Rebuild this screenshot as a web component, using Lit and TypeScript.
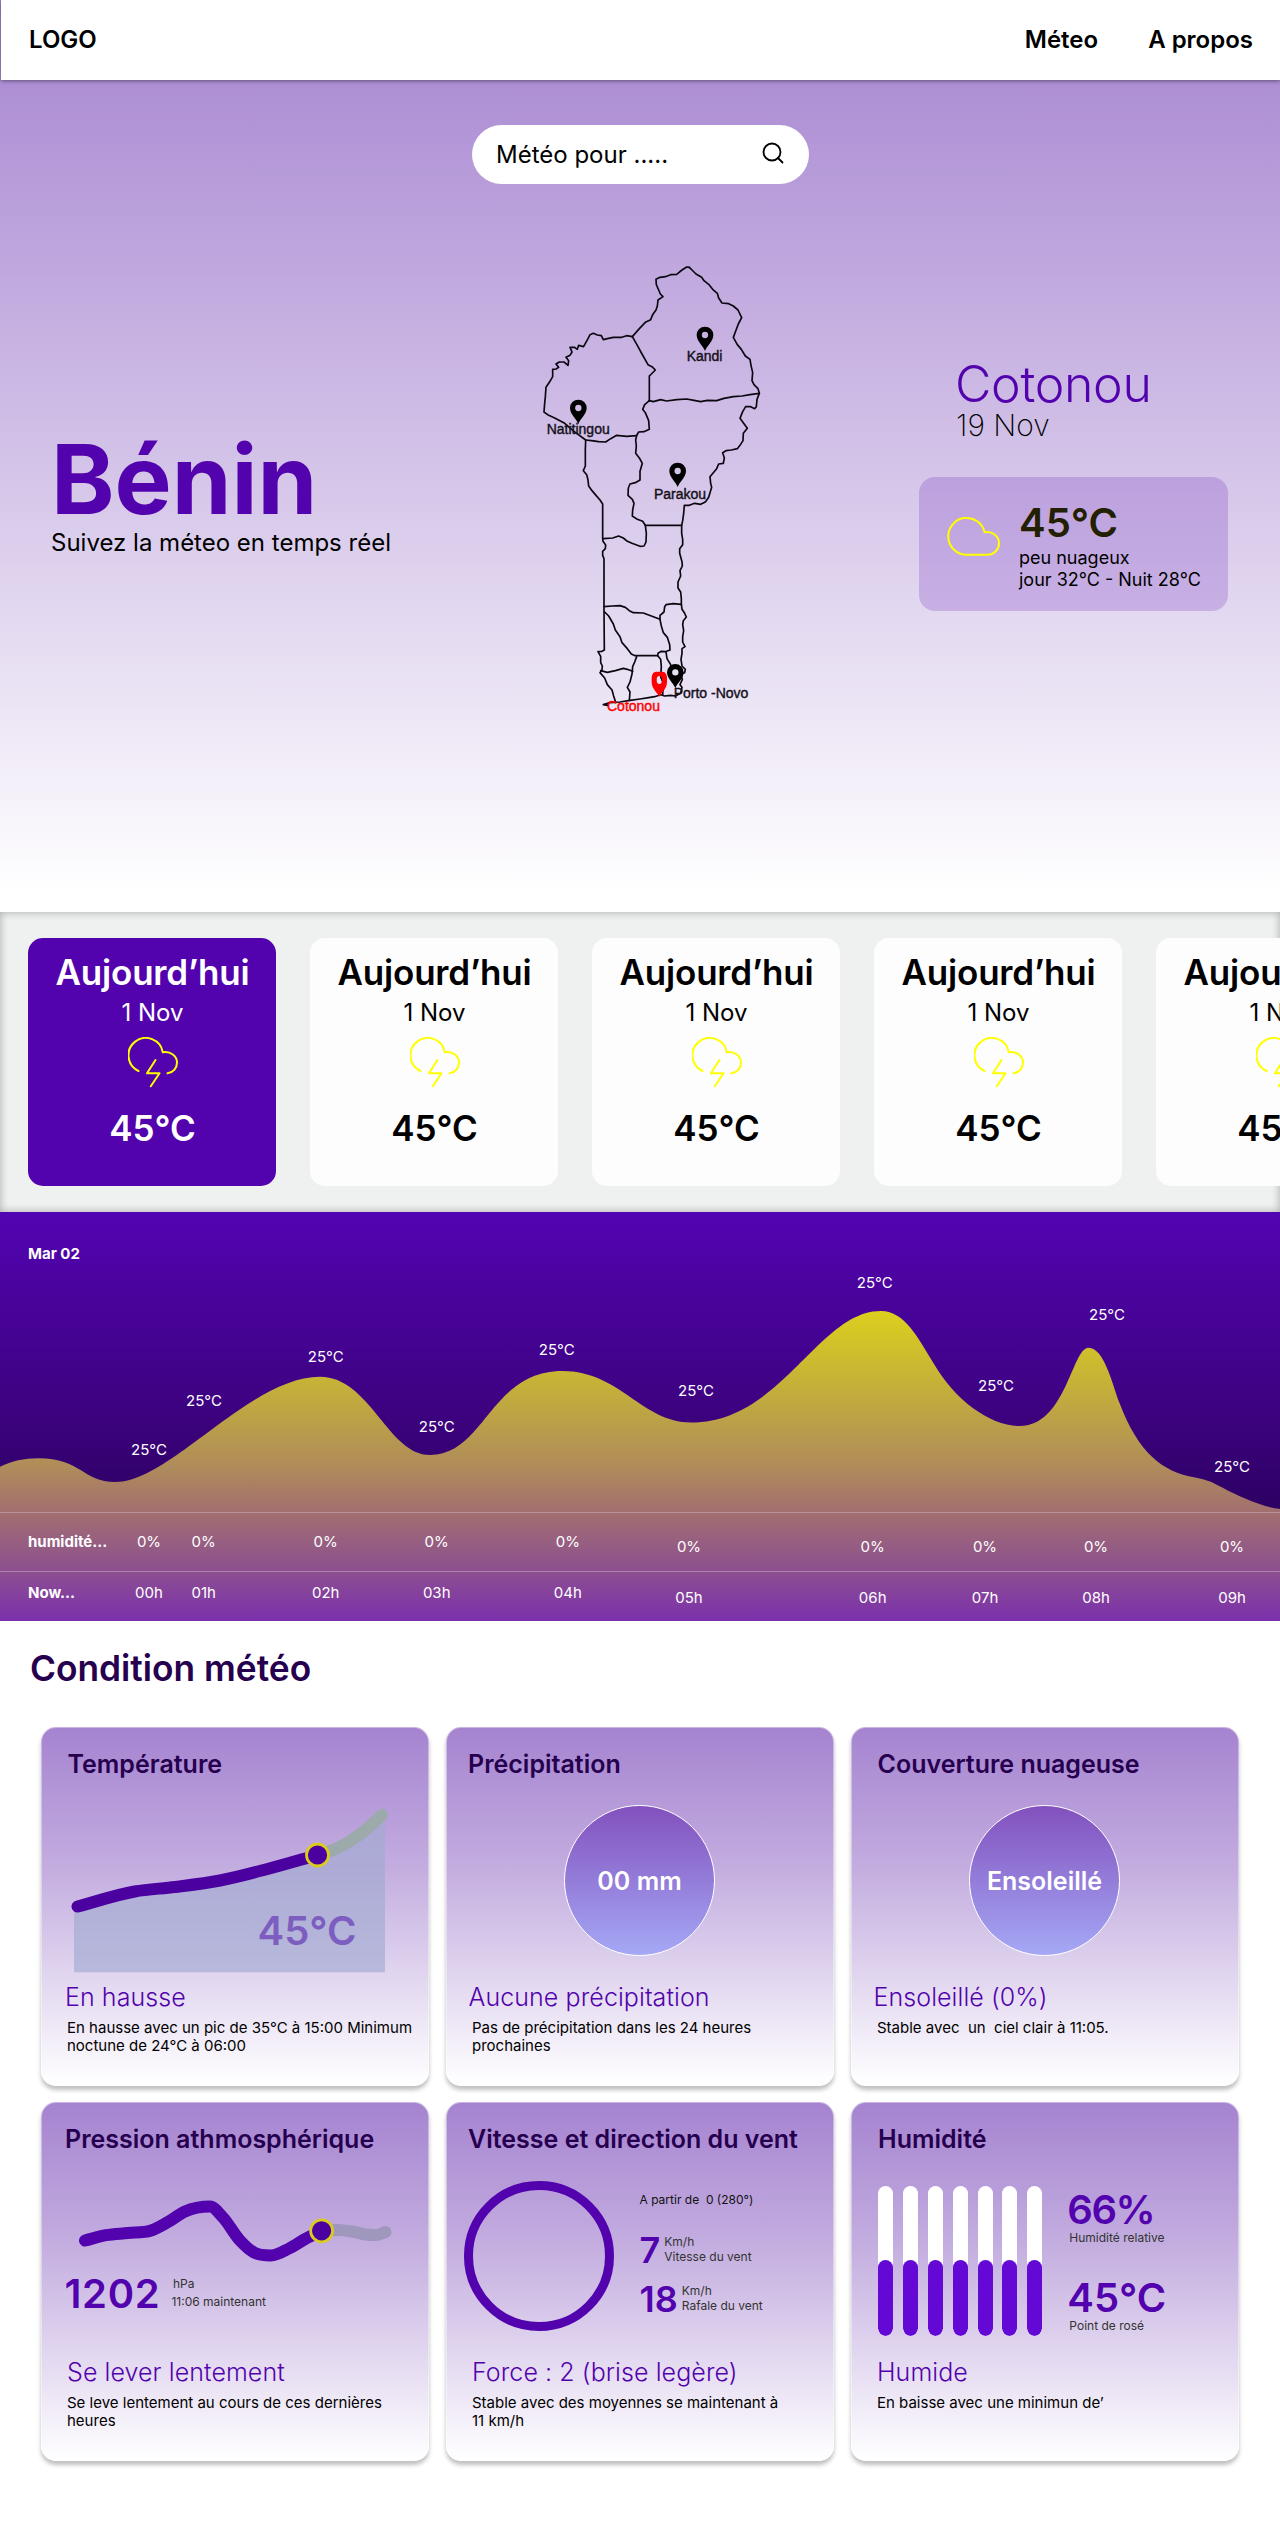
import { LitElement, html, svg, css } from "lit";
import { customElement, property } from "lit/decorators.js";
import { classMap } from "lit/directives/class-map.js";

type Pt = [number, number];

/** Slope at point i: flat at a peak or a trough, weighted mean of both sides elsewhere. */
function slope(p: Pt[], i: number): number {
  const side = (j: number) => (p[j + 1][1] - p[j][1]) / (p[j + 1][0] - p[j][0]);
  if (i === 0) return side(0);
  if (i === p.length - 1) return side(i - 1);
  const before = side(i - 1);
  const after = side(i);
  if (before * after <= 0) return 0;
  const h1 = p[i][0] - p[i - 1][0];
  const h2 = p[i + 1][0] - p[i][0];
  return (h2 * before + h1 * after) / (h1 + h2);
}

/** Smooth cubic path through points with rising x. */
function smooth(points: Pt[]): string {
  let d = `M${points[0][0]} ${points[0][1]}`;
  for (let i = 0; i < points.length - 1; i++) {
    const b = points[i];
    const c = points[i + 1];
    const t = (c[0] - b[0]) / 3;
    d += ` C${b[0] + t} ${b[1] + slope(points, i) * t} ${c[0] - t} ${c[1] - slope(points, i + 1) * t} ${c[0]} ${c[1]}`;
  }
  return d;
}

const line = (s: string) => svg`<polyline points=${s}></polyline>`;

@customElement("benin-map")
export class BeninMap extends LitElement {
  static styles = css`
    :host { display: block; width: 260px; height: 480px; }
    svg { display: block; overflow: visible; }
    .border { fill: none; stroke: #0b0710; stroke-width: 5; stroke-linejoin: round; stroke-linecap: round; }
    text { font: 42px "Liberation Sans", Arial, sans-serif; fill: #151019; stroke: #151019; stroke-width: 1.2; }
    .red { fill: #f00; stroke: #f00; }
  `;

  private pin(x: number, y: number) {
    return svg`<path fill="#000" fill-rule="evenodd" transform=${`translate(${x} ${y})`}
      d="M0 47C-5 32-25 18-25-1A25 25 0 0 1 25-1C25 18 5 32 0 47ZM0-10.500A9.500 9.500 0 1 0 0 8.500A9.500 9.500 0 1 0 0-10.500Z"></path>`;
  }

  render() {
    return html`<svg width="260" height="480" viewBox="0 0 780 1440">
      <g class="border">
        ${line("508,52 500,51 486,60 470,73 452,74 436,80 420,82 408,88 409,104 416,120 421,132 429,140 414,150 412,168 408,180 398,194 392,209 376,217 358,236 337,260")}
        ${line("508,52 516,60 528,72 545,82 552,92 566,103 578,118 592,130 596,144 606,159 626,161 640,168 654,180 665,203 655,222 646,246 640,262 652,284 664,298 676,318 690,328 693,346 698,368 696,392 702,404 714,416 718,430 711,448 709,470 704,476 692,470 677,470 668,485 660,505 672,521 682,535 670,550 669,572 660,586 652,596 634,600 618,602 608,608 613,624 610,640 596,642 590,656 580,668 570,680 572,700 575,712 570,728 566,742 556,756 542,763 524,760 508,766 493,766 491,790 488,812 485,826 485,850 488,868 488,884 479,896 479,910 486,935 487,948 480,962 482,978 474,996 474,1014 482,1026 484,1046 484,1062 486,1078 494,1090 499,1101 490,1112 488,1124 491,1142 488,1160 488,1176 495,1190 486,1196 486,1210 483,1228 486,1248 496,1258 494,1268 482,1272 487,1288 480,1304 486,1312 482,1330 466,1338 452,1336 434,1338 422,1334 404,1340 386,1343 360,1347 330,1351 300,1356 270,1358 250,1364 262,1366")}
        ${line("337,260 320,257 305,262 280,262 262,266 250,269 244,257 232,255 220,250 210,254 204,266 194,284 190,290 176,286 172,298 164,292 150,292 156,306 150,316 138,322 146,332 144,346 132,336 118,336 108,342 116,352 108,357 98,358 98,380 90,394 78,412 76,440 74,460 72,486 86,496 104,504 134,520 162,544 197,570 196,600 196,648 190,662 200,674 204,690 206,708 216,722 228,736 240,750 248,762 248,865 249,874 257,885 256,896 248,904 248,916 252,926 252,1080 253,1200 246,1204 234,1205 242,1219 242,1238 247,1248 246,1260 240,1268 254,1284 262,1304 276,1320 281,1338 286,1354")}
        ${line("337,260 352,286 366,312 384,344 396,350 406,360 388,378 388,452")}
        ${line("388,452 400,455 422,449 440,453 470,449 500,447 522,451 542,455 562,451 590,452 612,445 640,440 666,438 690,434 718,430")}
        ${line("388,452 374,464 368,478 376,488 386,512 388,538 372,545 356,546 350,556 347,570 349,588 347,610 358,624 367,640 360,664 360,690 346,698 330,702 325,714 324,736 337,748 342,760 338,780 337,798 352,808 368,814 376,826 485,826")}
        ${line("197,570 214,572 236,575 257,576 272,566 290,556 320,559 350,557")}
        ${line("376,826 379,850 378,876 372,888 360,889 336,880 322,874 310,864 296,858 278,864 250,866")}
        ${line("252,1070 276,1068 300,1067 316,1072 328,1082 340,1088 370,1089 394,1098 420,1108 420,1096 432,1086 434,1070 438,1064 460,1061 484,1063")}
        ${line("420,1108 424,1128 430,1148 442,1162 449,1184 450,1200 436,1205 424,1204 414,1210 413,1217 345,1217 334,1212 322,1196 306,1178 300,1160 286,1140 280,1122 266,1098 254,1086")}
        ${line("350,1220 344,1236 338,1250 336,1272 330,1296 322,1312 330,1326 328,1351")}
        ${line("242,1262 262,1267 286,1262 310,1255 322,1258 338,1264")}
        ${line("413,1217 422,1228 424,1250 422,1280 430,1300 428,1334")}
        ${line("438,1206 441,1226 452,1244 456,1256")}
      </g>
      ${this.pin(555, 256)}${this.pin(175, 475)}${this.pin(473, 664)}${this.pin(466, 1268)}
      <path fill="#f00" fill-rule="evenodd" transform="translate(418 1291)"
        d="M0 49C-8 36-23 24-23 6V-10Q-21-26-8-26H8Q21-26 23-10V6C23 24 8 36 0 49ZM0-13A8 12 0 1 0 0 11A8 12 0 1 0 0-13Z"></path>
      <text x="500" y="332">Kandi</text>
      <text x="80" y="551">Natitingou</text>
      <text x="402" y="747">Parakou</text>
      <text x="461" y="1345">Porto -Novo</text>
      <text x="261" y="1384" class="red">Cotonou</text>
    </svg>`;
  }
}

@customElement("day-card")
export class DayCard extends LitElement {
  @property({ type: Boolean }) active = false;

  static styles = css`
    :host { display: block; flex: none; }
    .card { box-sizing: border-box; width: 248px; height: 248px; padding: 12px 0 0 1px; border-radius: 15px; background: #fdfdfd; color: #000; display: flex; flex-direction: column; align-items: center; }
    .active { background: #5203ad; color: #fff; }
    .big { font-size: 35px; line-height: 44px; font-weight: 600; }
    .day { letter-spacing: -0.2px; }
    .date { font-size: 24px; line-height: 29px; margin-top: 4px; }
    svg { display: block; margin: 10px 0 17px; }
  `;

  render() {
    return html`<div class=${classMap({ card: true, active: this.active })}>
      <div class="big day">Aujourd’hui</div>
      <div class="date">1 Nov</div>
      <svg width="50" height="52" viewBox="127.500 1036 50 52" fill="none" stroke="#ff0" stroke-width="2" stroke-linecap="round" stroke-linejoin="round">
        <path d="M138 1070A17.300 17.300 0 1 1 162.300 1051.300C170 1050 176.500 1055 176.500 1061.500C176.500 1067 173 1071.500 167 1072.300"></path>
        <path d="M155 1059L146.500 1072.300H159L150.300 1085.300"></path>
      </svg>
      <div class="big">45°C</div>
    </div>`;
  }
}

@customElement("hour-chart")
export class HourChart extends LitElement {
  static styles = css`
    :host { display: block; height: 409px; background: linear-gradient(#5304b2 0%, #3b027c 52%, #2b0060 75%); }
    svg { display: block; }
    text { font-size: 15px; fill: #fff; text-anchor: middle; font-weight: 400; }
    .head { text-anchor: start; font-weight: 700; }
    .rule { stroke: #dcc8dc; stroke-opacity: 0.4; }
  `;

  private readonly curve =
    "M0 254.700C12 249 24 246.300 38 246.300C82 246.300 82 270 115.500 270C170 270 250 164.700 320 164.700" +
    "C370 164.700 388 243 430 243C485 243 490 159 562.500 159C620 159 642 210.500 691 210.500" +
    "C782 210.500 818 99 881 99C905 99 918 126 934 152C955 188 990 214 1019.500 214" +
    "C1066 214 1072 135.700 1088.500 135.700C1104 135.700 1112 171 1119.600 191.300" +
    "C1138 240 1162 260 1195 265.500C1215 269 1218 275 1244 286C1258 292 1268 295.500 1280 297V409H0Z";

  private readonly temps: Pt[] = [
    [149, 243.3], [204, 194], [325.7, 150], [436.7, 220], [556.7, 143], [696, 184], [874.7, 76.3], [996, 179],
    [1107, 108.3], [1232, 260.3],
  ];

  private readonly hours = [149, 203.7, 325.7, 436.7, 567.8, 689, 872.7, 985, 1096, 1232];

  render() {
    return html`<svg width="1280" height="409" viewBox="0 0 1280 409">
      <defs>
        <linearGradient id="area" gradientUnits="userSpaceOnUse" x1="0" y1="99" x2="0" y2="409">
          <stop offset="0" stop-color="#dccf1e"></stop>
          <stop offset="0.210" stop-color="#c8b435"></stop>
          <stop offset="0.500" stop-color="#b08c5a"></stop>
          <stop offset="0.640" stop-color="#a3706e"></stop>
          <stop offset="0.840" stop-color="#8c4f90"></stop>
          <stop offset="1" stop-color="#7b30ac"></stop>
        </linearGradient>
      </defs>
      <path fill="url(#area)" d=${this.curve}></path>
      <path class="rule" d="M0 300.500H1280M0 359.500H1280"></path>
      <text class="head" x="28" y="47.300">Mar 02</text>
      <text class="head" x="28" y="335.300">humidité...</text>
      <text class="head" x="28" y="386">Now...</text>
      ${this.temps.map(([x, y]) => svg`<text x=${x} y=${y}>25°C</text>`)}
      ${this.hours.map((x, i) => svg`
        <text x=${x} y=${i < 5 ? 335.3 : 340}>0%</text>
        <text x=${x} y=${i < 5 ? 386 : 391}>0${i}h</text>`)}
    </svg>`;
  }
}

@customElement("condition-card")
export class ConditionCard extends LitElement {
  @property() heading = "";
  @property() state = "";
  @property() text = "";

  static styles = css`
    :host { display: block; }
    .card { box-sizing: border-box; height: 359px; padding-top: 21.500px; border-radius: 15px; border: 1px solid rgba(255, 255, 255, 0.4); background: linear-gradient(#a583d0, #c4aee0 40%, #fff) border-box; box-shadow: 0 4px 4px rgba(0, 0, 0, 0.25); }
    .title { font-size: 25px; line-height: 29px; font-weight: 600; color: #26004f; padding-left: var(--title-x, 25px); white-space: nowrap; }
    .visual { height: 204px; margin: 0 -1px; }
    .state { font-size: 25px; line-height: 29px; font-weight: 350; letter-spacing: 0.080px; color: #5203ad; padding-left: var(--state-x, 24px); }
    .text { font-size: 15px; line-height: 18px; color: #000; margin-top: 7px; padding-left: 25px; white-space: pre; }
  `;

  render() {
    return html`<div class="card">
      <div class="title">${this.heading}</div>
      <div class="visual"><slot></slot></div>
      <div class="state">${this.state}</div>
      <div class="text">${this.text}</div>
    </div>`;
  }
}

@customElement("app-root")
export class AppRoot extends LitElement {
  static styles = css`
    :host { display: block; width: 1280px; height: 2537px; overflow: hidden; background: #fff; font-family: Inter, sans-serif; color: #000; }
    svg { display: block; }
    .hero { height: 912px; background: linear-gradient(#a583d0, #fff 98%); }
    .header { height: 80px; box-sizing: border-box; margin-left: 1px; padding: 0 27px 1px 28px; background: #fff; box-shadow: 0 1px 4px rgba(0, 0, 0, 0.45); display: flex; align-items: center; gap: 50px; font-size: 24px; font-weight: 600; }
    .logo { flex: 1; }
    .search { box-sizing: border-box; width: 337px; height: 59px; margin: 45px 0 0 472px; padding: 0 25px 0 24px; border-radius: 30px; background: #fff; display: flex; align-items: center; justify-content: space-between; font-size: 24px; }
    .search svg { margin-bottom: 4px; }
    .panels { display: grid; grid-template-columns: 469px 399px 309px; padding-left: 51px; }
    .intro { padding-top: 246px; }
    .country { font-size: 96px; line-height: 98px; font-weight: 700; color: #5203ad; }
    .tagline { font-size: 24px; line-height: 29px; }
    .map { padding-top: 66px; }
    .city { padding-top: 176.500px; }
    .name { font-size: 50px; line-height: 46px; font-weight: 350; letter-spacing: -0.300px; color: #5203ad; margin-left: 36px; }
    .date { font-size: 30px; line-height: 36px; font-weight: 200; margin-left: 37px; }
    .now { box-sizing: border-box; height: 134px; margin-top: 34.500px; padding: 21.500px 0 0 28px; border-radius: 16px; background: rgba(82, 0, 174, 0.185); display: flex; gap: 17px; font-size: 18px; line-height: 22px; white-space: nowrap; }
    .now svg { margin-top: 17px; flex: none; }
    .degree { font-size: 40px; line-height: 48px; font-weight: 600; color: #222000; }
    .days { box-sizing: border-box; height: 300px; padding: 26px 28px; display: flex; gap: 34px; overflow: hidden; background: #eff1f1; box-shadow: inset 0 0 8px rgba(0, 0, 0, 0.3); }
    .section { font-size: 35.300px; line-height: 44px; font-weight: 600; color: #26004f; margin: 26px 0 0 30px; }
    .grid { display: grid; grid-template-columns: repeat(3, 388px); gap: 16px 17px; margin: 36px 0 0 41px; }
    .orb { box-sizing: border-box; width: 151px; height: 151px; margin: 0 0 0 118px; border: 1px solid #fff; border-radius: 50%; background: linear-gradient(#8250bd, #a5a9f6) border-box; color: #fff; font-size: 25px; font-weight: 600; display: flex; align-items: center; justify-content: center; }
    .orb-box { padding-top: 26.500px; }
    .in-chart { font-size: 40px; font-weight: 600; fill: #7d5dc0; }
    .figure { font-size: 40px; line-height: 48px; font-weight: 600; color: #5203ad; }
    .hpa { letter-spacing: 0.700px; }
    .percent { letter-spacing: -1.500px; }
    .row { display: flex; }
    .pressure { padding-left: 23.500px; gap: 11px; }
    .notes { font-size: 12px; line-height: 18px; color: #333; padding-top: 5px; }
    .notes .first { padding-left: 1.500px; }
    .wind { padding: 27px 0 0 17.500px; gap: 26px; }
    .ring { box-sizing: border-box; width: 150px; height: 150px; border: 9px solid #5203ad; border-radius: 50%; }
    .small { font-size: 12px; line-height: 15px; color: #333; white-space: pre; }
    .dark { color: #111; padding-top: 11.500px; }
    .gust { gap: 4px; }
    .gust .figure { font-size: 36px; line-height: 44px; }
    .gust .small { padding-top: 6px; }
    .speed { margin-top: 20.500px; }
    .burst { margin-top: 5px; }
    .humidity { padding: 32.500px 0 0 27px; gap: 25px; }
    .bars { display: flex; gap: 9.900px; }
    .bar { width: 15px; height: 150px; border-radius: 8px; background: #fff; display: flex; flex-direction: column; justify-content: flex-end; overflow: hidden; }
    .level { height: 76px; border-radius: 8px; background: #6408d6; }
    .readings .small { margin: -4.500px 0 29.500px 2px; }
    .c1 { --title-x: 25.500px; --state-x: 23px; }
    .c2 { --title-x: 21px; --state-x: 21.500px; }
    .c3 { --title-x: 25.500px; --state-x: 21.500px; }
    .c4 { --title-x: 23px; --state-x: 25px; }
    .c5 { --title-x: 21px; --state-x: 25px; }
    .c6 { --title-x: 26px; --state-x: 25px; }
  `;

  render() {
    const temperature: Pt[] = [[77.5, 1906], [134.7, 1891], [175, 1886.5], [220, 1880], [269.4, 1868], [317.5, 1854.5]];
    const forecast: Pt[] = [[317.5, 1854.5], [334, 1849], [351, 1840], [366, 1829], [382, 1814.3]];
    const pressure: Pt[] = [[85, 2240], [106, 2234.7], [128, 2232.5], [151, 2230], [168, 2221.5], [185, 2211], [210, 2206], [223, 2217], [240, 2240], [254, 2252], [271, 2255], [290, 2247.5], [306, 2238], [321.6, 2230.3]];
    const later: Pt[] = [[321.6, 2230.3], [338, 2229.5], [352, 2231], [366, 2234], [376, 2234.5], [385.5, 2231.5]];
    return html`
      <section class="hero">
        <header class="header"><span class="logo">LOGO</span><span>Méteo</span><span>A propos</span></header>
        <div class="search">
          <span>Météo pour .....</span>
          <svg width="22" height="22" viewBox="0 0 22 22" fill="none" stroke="#000" stroke-width="1.800" stroke-linecap="round">
            <circle cx="10" cy="10" r="8.500"></circle><path d="M16 16L20.500 20.500"></path>
          </svg>
        </div>
        <div class="panels">
          <div class="intro">
            <div class="country">Bénin</div>
            <div class="tagline">Suivez la méteo en temps réel</div>
          </div>
          <div class="map"><benin-map></benin-map></div>
          <div class="city">
            <div class="name">Cotonou</div>
            <div class="date">19 Nov</div>
            <div class="now">
              <svg width="55" height="42" viewBox="47 176 55 42" fill="none" stroke="#ff0" stroke-width="2" stroke-linejoin="round">
                <path d="M66.500 214.700A18.400 18.400 0 1 1 84.600 192.200C92 190.700 99 196 99 203.200A11.400 11.400 0 0 1 88 214.700Z"></path>
              </svg>
              <div>
                <div class="degree">45°C</div>
                <div>peu nuageux</div>
                <div>jour 32°C - Nuit 28°C</div>
              </div>
            </div>
          </div>
        </div>
      </section>
      <section class="days">
        ${[0, 1, 2, 3, 4].map((i) => html`<day-card ?active=${i === 0}></day-card>`)}
      </section>
      <hour-chart></hour-chart>
      <div class="section">Condition météo</div>
      <section class="grid">
        <condition-card class="c1" heading="Température" state="En hausse" .text=${"En hausse avec un pic de 35°C à 15:00 Minimum\nnoctune de 24°C à 06:00"}>
          <svg width="388" height="204" viewBox="41 1778.500 388 204" fill="none" stroke-width="12" stroke-linecap="round">
            <path fill="#a2aad1" fill-opacity="0.650" d=${smooth([...temperature, ...forecast.slice(1)]) + "L385 1816V1971.700H74V1907Z"}></path>
            <path stroke="#9caaab" d=${smooth(forecast)}></path>
            <path stroke="#4b019f" d=${smooth(temperature)}></path>
            <circle cx="317.500" cy="1854.500" r="11" fill="#4b019f" stroke="#d9cb1f" stroke-width="2.800"></circle>
            <text class="in-chart" x="257.500" y="1944.500">45°C</text>
          </svg>
        </condition-card>
        <condition-card class="c2" heading="Précipitation" state="Aucune précipitation" .text=${"Pas de précipitation dans les 24 heures\nprochaines"}>
          <div class="orb-box"><div class="orb">00 mm</div></div>
        </condition-card>
        <condition-card class="c3" heading="Couverture nuageuse" state="Ensoleillé (0%)" .text=${"Stable avec  un  ciel clair à 11:05."}>
          <div class="orb-box"><div class="orb">Ensoleillé</div></div>
        </condition-card>
        <condition-card class="c4" heading="Pression athmosphérique" state="Se lever lentement" .text=${"Se leve lentement au cours de ces dernières\nheures"}>
          <svg width="388" height="116" viewBox="41 2153.500 388 116" fill="none" stroke-width="12" stroke-linecap="round">
            <path stroke="#9f97bc" d=${smooth(later)}></path>
            <path stroke="#5203ad" d=${smooth(pressure)}></path>
            <circle cx="321.600" cy="2230.300" r="11" fill="#4b019f" stroke="#d9cb1f" stroke-width="2.800"></circle>
          </svg>
          <div class="row pressure">
            <div class="figure hpa">1202</div>
            <div class="notes"><div class="first">hPa</div><div>11:06 maintenant</div></div>
          </div>
        </condition-card>
        <condition-card class="c5" heading="Vitesse et direction du vent" state="Force : 2 (brise legère)" .text=${"Stable avec des moyennes se maintenant à\n11 km/h"}>
          <div class="row wind">
            <div class="ring"></div>
            <div>
              <div class="small dark">A partir de  0 (280°)</div>
              <div class="row gust speed"><div class="figure">7</div><div class="small">Km/h<br>Vitesse du vent</div></div>
              <div class="row gust burst"><div class="figure">18</div><div class="small">Km/h<br>Rafale du vent</div></div>
            </div>
          </div>
        </condition-card>
        <condition-card class="c6" heading="Humidité" state="Humide" .text=${"En baisse avec une minimun de’"}>
          <div class="row humidity">
            <div class="bars">${Array.from({ length: 7 }, () => html`<div class="bar"><div class="level"></div></div>`)}</div>
            <div class="readings">
              <div class="figure percent">66%</div><div class="small">Humidité relative</div>
              <div class="figure">45°C</div><div class="small">Point de rosé</div>
            </div>
          </div>
        </condition-card>
      </section>`;
  }
}
